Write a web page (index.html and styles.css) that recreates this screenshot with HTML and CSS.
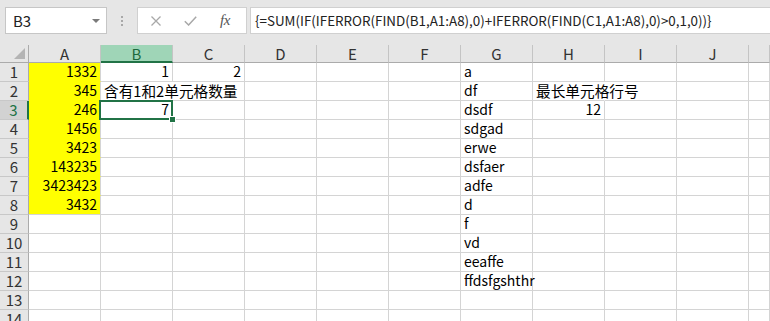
FILE: index.html
```html
<!DOCTYPE html>
<html lang="zh">
<head>
<meta charset="utf-8">
<title>Sheet</title>
<link rel="stylesheet" href="styles.css">
</head>
<body>
<div class="toolbar">
  <div class="namebox"><span>B3</span><span class="arrow"></span></div>
  <div class="dots"><i></i><i></i><i></i></div>
  <div class="fxbox">
    <svg class="ic-x" width="10" height="10" viewBox="0 0 10 10"><path d="M0.5 0.5L9.5 9.5M9.5 0.5L0.5 9.5" stroke="#a8a8a8" stroke-width="1.3" fill="none"/></svg>
    <svg class="ic-ok" width="13" height="10" viewBox="0 0 13 10"><path d="M0.8 5.2L4.6 9L12.2 0.8" stroke="#a8a8a8" stroke-width="1.5" fill="none"/></svg>
    <span class="fx">fx</span>
  </div>
  <div class="formula">{=SUM(IF(IFERROR(FIND(B1,A1:A8),0)+IFERROR(FIND(C1,A1:A8),0)&gt;0,1,0))}</div>
</div>
<div class="sheet">
  <div class="corner"></div><div class="ch">A</div><div class="ch sel">B</div><div class="ch">C</div><div class="ch">D</div><div class="ch">E</div><div class="ch">F</div><div class="ch">G</div><div class="ch">H</div><div class="ch">I</div><div class="ch">J</div><div class="ch"></div>

  <div class="rh">1</div><div class="c y n">1332</div><div class="c n">1</div><div class="c n">2</div><div class="c"></div><div class="c"></div><div class="c"></div><div class="c">a</div><div class="c"></div><div class="c"></div><div class="c"></div><div class="c"></div>

  <div class="rh">2</div><div class="c y n">345</div><div class="c ov">含有1和2单元格数量</div><div class="c"></div><div class="c"></div><div class="c"></div><div class="c"></div><div class="c">df</div><div class="c ov">最长单元格行号</div><div class="c"></div><div class="c"></div><div class="c"></div>

  <div class="rh on">3</div><div class="c y n">246</div><div class="c n active">7</div><div class="c"></div><div class="c"></div><div class="c"></div><div class="c"></div><div class="c">dsdf</div><div class="c n">12</div><div class="c"></div><div class="c"></div><div class="c"></div>

  <div class="rh">4</div><div class="c y n">1456</div><div class="c"></div><div class="c"></div><div class="c"></div><div class="c"></div><div class="c"></div><div class="c">sdgad</div><div class="c"></div><div class="c"></div><div class="c"></div><div class="c"></div>

  <div class="rh">5</div><div class="c y n">3423</div><div class="c"></div><div class="c"></div><div class="c"></div><div class="c"></div><div class="c"></div><div class="c">erwe</div><div class="c"></div><div class="c"></div><div class="c"></div><div class="c"></div>

  <div class="rh">6</div><div class="c y n">143235</div><div class="c"></div><div class="c"></div><div class="c"></div><div class="c"></div><div class="c"></div><div class="c">dsfaer</div><div class="c"></div><div class="c"></div><div class="c"></div><div class="c"></div>

  <div class="rh">7</div><div class="c y n">3423423</div><div class="c"></div><div class="c"></div><div class="c"></div><div class="c"></div><div class="c"></div><div class="c">adfe</div><div class="c"></div><div class="c"></div><div class="c"></div><div class="c"></div>

  <div class="rh">8</div><div class="c y n last">3432</div><div class="c"></div><div class="c"></div><div class="c"></div><div class="c"></div><div class="c"></div><div class="c">d</div><div class="c"></div><div class="c"></div><div class="c"></div><div class="c"></div>

  <div class="rh">9</div><div class="c"></div><div class="c"></div><div class="c"></div><div class="c"></div><div class="c"></div><div class="c"></div><div class="c">f</div><div class="c"></div><div class="c"></div><div class="c"></div><div class="c"></div>

  <div class="rh">10</div><div class="c"></div><div class="c"></div><div class="c"></div><div class="c"></div><div class="c"></div><div class="c"></div><div class="c">vd</div><div class="c"></div><div class="c"></div><div class="c"></div><div class="c"></div>

  <div class="rh">11</div><div class="c"></div><div class="c"></div><div class="c"></div><div class="c"></div><div class="c"></div><div class="c"></div><div class="c">eeaffe</div><div class="c"></div><div class="c"></div><div class="c"></div><div class="c"></div>

  <div class="rh">12</div><div class="c"></div><div class="c"></div><div class="c"></div><div class="c"></div><div class="c"></div><div class="c"></div><div class="c">ffdsfgshthr</div><div class="c"></div><div class="c"></div><div class="c"></div><div class="c"></div>

  <div class="rh">13</div><div class="c"></div><div class="c"></div><div class="c"></div><div class="c"></div><div class="c"></div><div class="c"></div><div class="c"></div><div class="c"></div><div class="c"></div><div class="c"></div><div class="c"></div>

  <div class="rh">14</div><div class="c"></div><div class="c"></div><div class="c"></div><div class="c"></div><div class="c"></div><div class="c"></div><div class="c"></div><div class="c"></div><div class="c"></div><div class="c"></div><div class="c"></div>
</div>
</body>
</html>
```

FILE: styles.css
```css
html, body {
  margin: 0;
  padding: 0;
}
body {
  width: 770px;
  height: 321px;
  overflow: hidden;
  background: #fff;
  font-family: "Noto Sans CJK SC", "Noto Sans", sans-serif;
  color: #000;
}
.toolbar {
  height: 45px;
  box-sizing: border-box;
  background: #e6e6e6;
  display: flex;
  align-items: flex-start;
  padding: 7px 0 0 5px;
}
.namebox {
  width: 102px;
  height: 27px;
  box-sizing: border-box;
  background: #fff;
  border: 1px solid #c6c6c6;
  display: flex;
  align-items: center;
  padding-left: 7px;
  font-size: 15px;
  color: #222;
}
.namebox .arrow {
  margin-left: auto;
  margin-right: 6px;
  width: 0;
  height: 0;
  border-left: 4px solid transparent;
  border-right: 4px solid transparent;
  border-top: 4px solid #7a7a7a;
}
.dots {
  margin-left: 14px;
  margin-top: 9px;
  display: flex;
  flex-direction: column;
  gap: 2px;
}
.dots i {
  display: block;
  width: 2px;
  height: 2px;
  background: #a8a8a8;
}
.fxbox {
  margin-left: 14px;
  width: 110px;
  height: 27px;
  box-sizing: border-box;
  background: #fff;
  border: 1px solid #d0d0d0;
  display: flex;
  align-items: center;
}
.ic-x { margin-left: 13px; }
.ic-ok { margin-left: 23px; }
.fx {
  margin-left: 23px;
  font-family: "Liberation Serif", serif;
  font-style: italic;
  font-size: 15px;
  color: #555;
  letter-spacing: -0.5px;
}
.formula {
  margin-left: 3px;
  flex: 1;
  height: 27px;
  box-sizing: border-box;
  background: #fff;
  border: 1px solid #d0d0d0;
  border-right: none;
  padding-left: 4px;
  font-size: 13.4px;
  line-height: 25px;
  color: #222;
  white-space: nowrap;
  overflow: hidden;
}
.sheet {
  display: grid;
  grid-template-columns: 29px repeat(10, 72px) 21px;
  grid-template-rows: 18px;
  grid-auto-rows: 19px;
  font-size: 14px;
}
.c {
  box-sizing: border-box;
  border-right: 1px solid #d4d4d4;
  border-bottom: 1px solid #d4d4d4;
  padding: 0 3px;
  line-height: 17px;
  white-space: nowrap;
  overflow: visible;
}
.n { text-align: right; }
.ov {
  border-right-color: transparent;
  font-size: 14.67px;
}
.y {
  background: #ffff00;
  border-bottom-color: #ffff00;
}
.y.last { border-bottom-color: #d4d4d4; }
.corner {
  position: relative;
  background: #e6e6e6;
  border-right: 1px solid #ababab;
  border-bottom: 1px solid #ababab;
}
.corner::after {
  content: "";
  position: absolute;
  right: 3px;
  bottom: 3px;
  width: 0;
  height: 0;
  border-left: 11px solid transparent;
  border-bottom: 11px solid #b4b4b4;
}
.ch {
  box-sizing: border-box;
  background: #e6e6e6;
  border-right: 1px solid #c4c4c4;
  border-bottom: 1px solid #ababab;
  text-align: center;
  font-size: 15px;
  line-height: 17px;
  color: #333;
}
.ch.sel {
  background: #9fd5b7;
  border-bottom: 2px solid #217346;
  color: #1d6a3c;
}
.rh {
  box-sizing: border-box;
  background: #e6e6e6;
  border-right: 1px solid #ababab;
  border-bottom: 1px solid #c8c8c8;
  text-align: center;
  font-size: 15px;
  line-height: 18px;
  color: #333;
}
.rh.on {
  background: #d2d2d2;
  color: #217346;
  border-right: 2px solid #217346;
}
.active {
  position: relative;
}
.active::before {
  content: "";
  position: absolute;
  left: -2px;
  top: -1px;
  right: -1px;
  bottom: -1px;
  border: 2px solid #217346;
}
.active::after {
  content: "";
  position: absolute;
  right: -3px;
  bottom: -3px;
  width: 5px;
  height: 5px;
  background: #217346;
  outline: 1px solid #fff;
}
```
